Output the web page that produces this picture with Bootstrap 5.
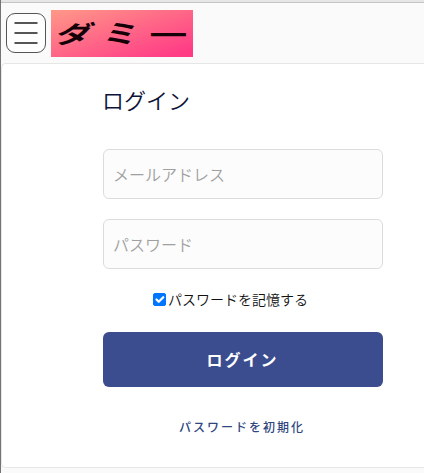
<!DOCTYPE html>
<html lang="ja">
<head>
<meta charset="utf-8">
<meta name="viewport" content="width=device-width, initial-scale=1">
<title>ログイン</title>
<link rel="stylesheet" href="https://cdn.jsdelivr.net/npm/bootstrap@5.3.0/dist/css/bootstrap.min.css">
<style>
body{font-family:"Noto Sans CJK JP",sans-serif;background:#fafafa;height:473px;overflow:hidden;border-left:1px solid #747474}
.top-strip{height:3px;background:#e6e6e6;border-bottom:1px solid #c4c4c4}
.site-header{height:60px;padding:7px 0 0 5px;gap:5px}
.menu-btn{width:40px;height:40px;margin-top:3px;border:1px solid #555;border-radius:9px;background:#fdfdfd}
.menu-btn svg,.logo svg{display:block}
.panel{height:405px;background:#fff;border:1px solid #e6e6e6;border-right:0;border-radius:5px 0 0 5px;padding:19px 0 0 101px}
.login-form{width:280px}
.title{font-size:22px;line-height:32px;font-weight:350;color:#0c1238;margin-bottom:34px;text-indent:-1px}
.field{height:50px;border:1px solid #dcdcdc;border-radius:6px;background:#fcfcfc;font-size:16px;padding:0 9px;margin-bottom:20px;font-weight:350}
.field::placeholder{color:#a0a0a0;opacity:1}
.remember{height:21px;margin-bottom:22px;padding-left:50px;gap:2px;font-size:14px;line-height:21px;color:#111}
.remember .form-check-input{width:13px;height:13px;margin:0;border-radius:2px}
.remember .form-check-input:checked{background-color:#0075ff;border-color:#0075ff;background-size:15px}
.remember label{font-weight:350}
.submit{height:55px;border-radius:6px;background:#3b4d8f;color:#fff;font-size:16px;font-weight:700;letter-spacing:2px}
.submit.btn{padding:0 1px 2px 0}
.reset{margin-top:31px;padding-right:2px;font-size:12px;line-height:18px;letter-spacing:2px;font-weight:500;color:#2f4680}
</style>
</head>
<body>
<div class="top-strip"></div>
<header class="site-header d-flex align-items-start">
  <button class="menu-btn btn p-0 d-flex align-items-center justify-content-center" aria-label="メニュー">
    <svg width="24" height="24" viewBox="0 0 24 24" stroke="#555" stroke-width="2"><path d="M0.500 2H23.500M0.500 12H23.500M0.500 22H23.500"/></svg>
  </button>
  <a class="logo" href="#" aria-label="ダミー">
    <svg width="142" height="47" viewBox="0 0 142 47">
      <defs><linearGradient id="pink" gradientUnits="userSpaceOnUse" x1="55" y1="-14" x2="79" y2="60"><stop offset="0" stop-color="#ff9488"/><stop offset="1" stop-color="#ff3b86"/></linearGradient></defs>
      <rect width="142" height="47" fill="url(#pink)"/>
      <g font-family="Noto Sans CJK JP,sans-serif" font-weight="700" font-size="26" fill="#160008">
        <text transform="translate(2.500 33) skewX(-20) scale(1.38 .94)">ダ</text>
        <text transform="translate(51 33) skewX(-12) scale(1.32 .98)">ミ</text>
        <text transform="translate(96 32.500) scale(1.65 .85)">ー</text>
      </g>
    </svg>
  </a>
</header>
<main class="panel">
  <form class="login-form">
    <h1 class="title">ログイン</h1>
    <input class="form-control field" type="email" placeholder="メールアドレス">
    <input class="form-control field" type="password" placeholder="パスワード">
    <div class="remember d-flex align-items-center">
      <input class="form-check-input" type="checkbox" id="remember" checked>
      <label for="remember">パスワードを記憶する</label>
    </div>
    <button class="submit btn w-100 border-0" type="button">ログイン</button>
    <a class="reset d-block text-center text-decoration-none" href="#">パスワードを初期化</a>
  </form>
</main>
<script src="https://cdn.jsdelivr.net/npm/bootstrap@5.3.0/dist/js/bootstrap.bundle.min.js"></script>
</body>
</html>
